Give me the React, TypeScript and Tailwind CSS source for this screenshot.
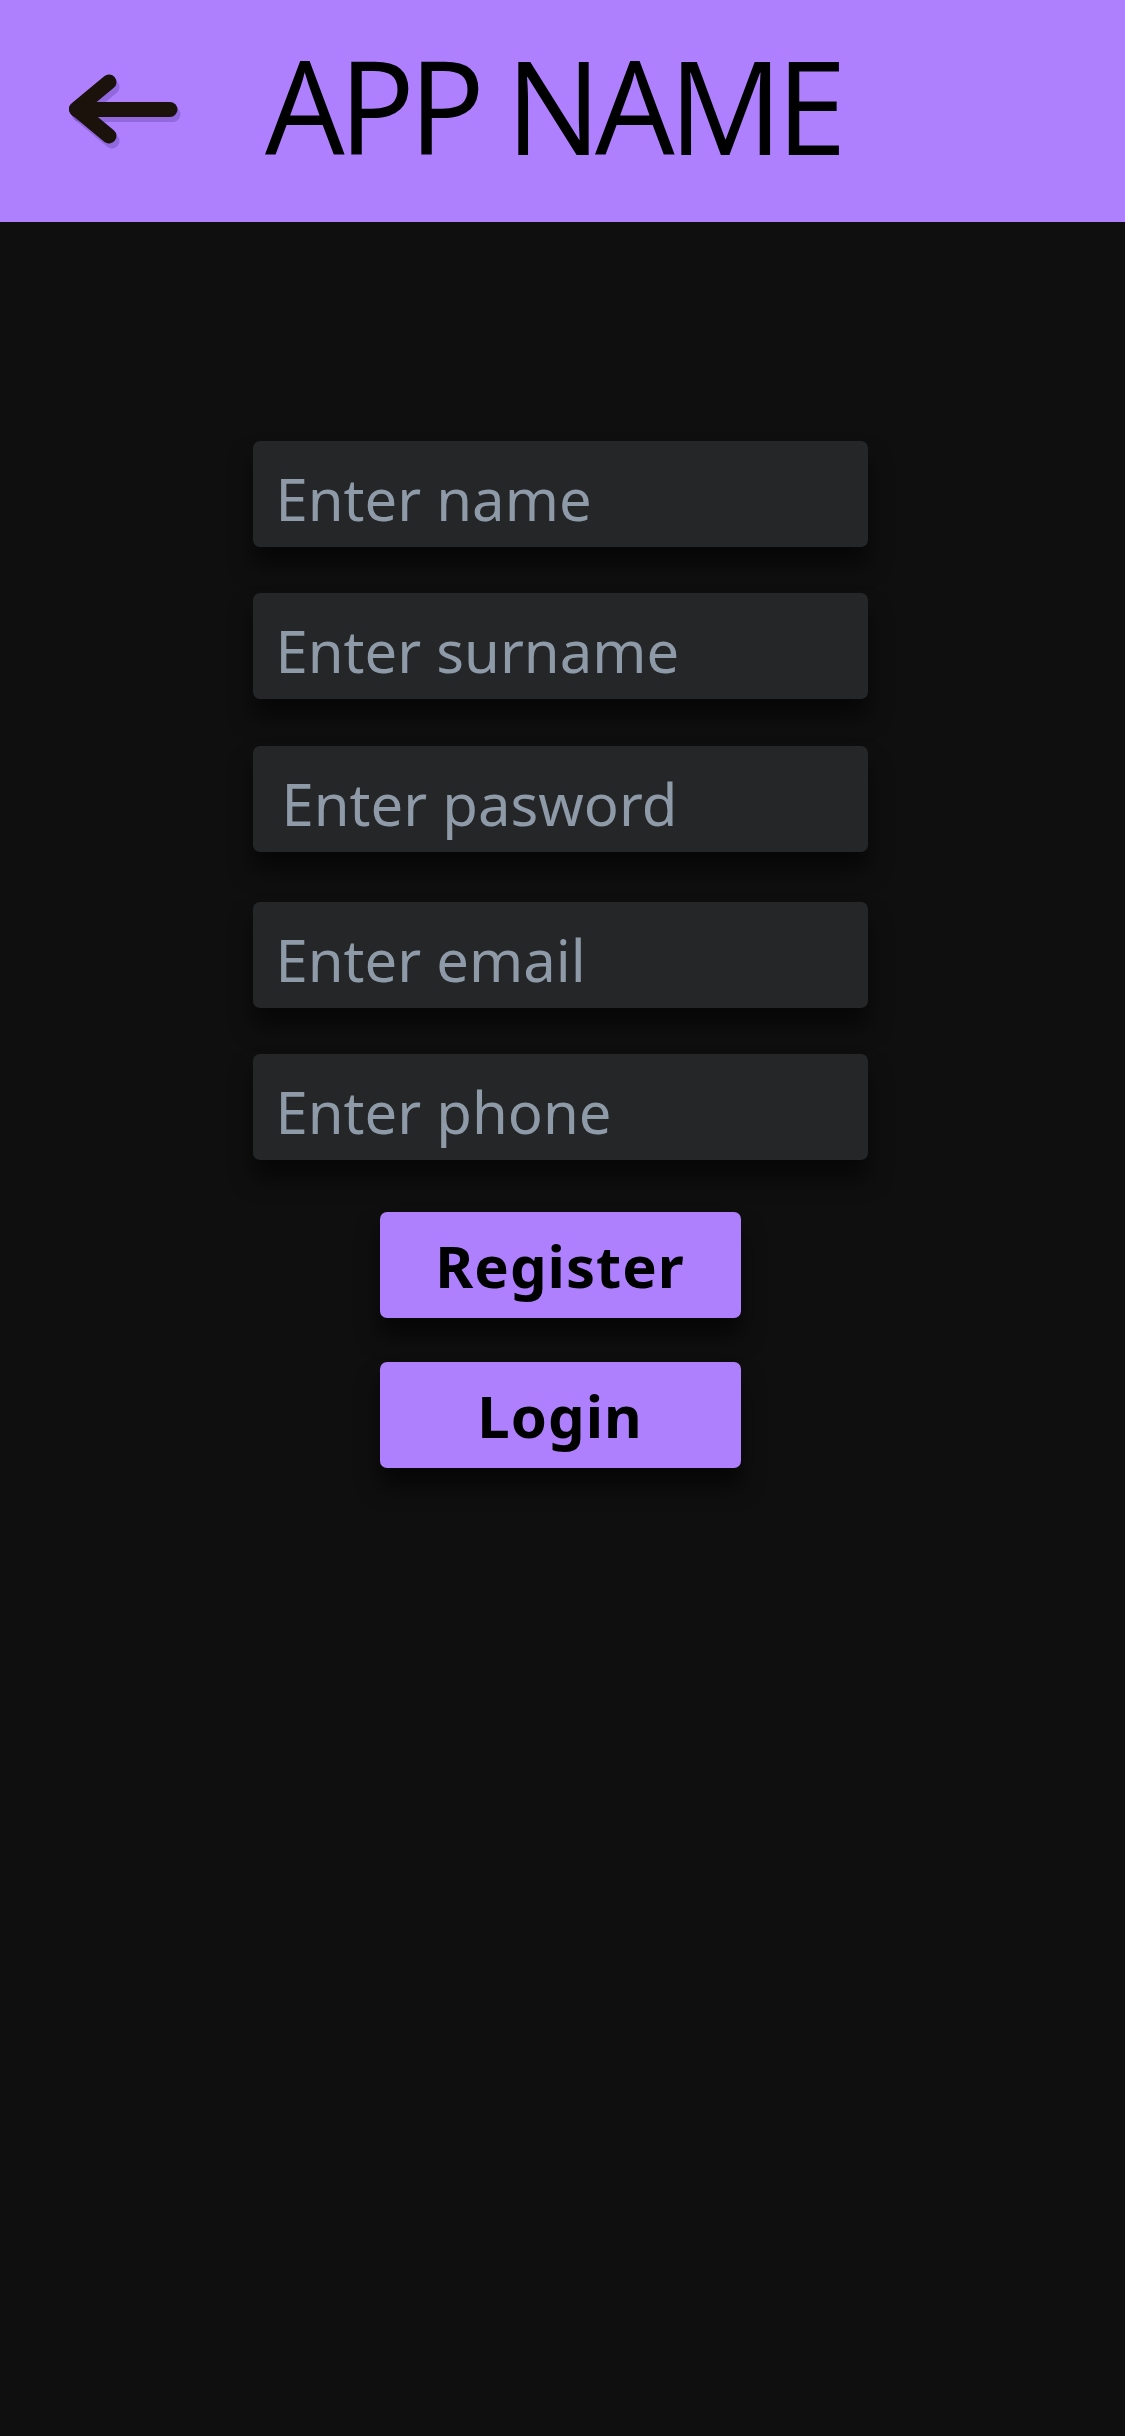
import { useState } from "react";

const fields = [
  { key: "name", placeholder: "Enter name", type: "text", pad: "pl-[23px]", gap: "mt-0" },
  { key: "surname", placeholder: "Enter surname", type: "text", pad: "pl-[23px]", gap: "mt-[46px]" },
  { key: "password", placeholder: "Enter pasword", type: "text", pad: "pl-[29px]", gap: "mt-[47px]" },
  { key: "email", placeholder: "Enter email", type: "email", pad: "pl-[23px]", gap: "mt-[50px]" },
  { key: "phone", placeholder: "Enter phone", type: "tel", pad: "pl-[23px]", gap: "mt-[46px]" }
];

function BackArrow() {
  return (
    <svg width="130" height="92" viewBox="0 0 130 92" fill="none" className="ml-[60px] shrink-0">
      <g stroke="#6f4bb8" strokeOpacity="0.45" strokeWidth="15" strokeLinecap="round" strokeLinejoin="round" transform="translate(3 5)">
        <path d="M49 17 L16.5 44 L49 71" />
        <path d="M16.5 44.5 H110" />
      </g>
      <g stroke="#1c120c" strokeWidth="15" strokeLinecap="round" strokeLinejoin="round">
        <path d="M49 17 L16.5 44 L49 71" />
        <path d="M16.5 44.5 H110" />
      </g>
    </svg>
  );
}

export default function App() {
  const [values, setValues] = useState<Record<string, string>>({});

  return (
    <div className="min-h-[2436px] w-full bg-[#0f0f0f] font-['Noto_Sans',sans-serif]">
      <header className="flex h-[222px] items-center bg-[#ae80fe]">
        <BackArrow />
        <h1 className="ml-[75px] mt-[-12px] origin-left scale-x-[0.97] whitespace-nowrap font-['Open_Sans',sans-serif] text-[130px] font-normal leading-none tracking-[-6px] text-black">
          APP NAME
        </h1>
      </header>

      <main className="flex flex-col items-center pr-[5px] pt-[219px]">
        {fields.map((field) => (
          <input
            key={field.key}
            type={field.type}
            placeholder={field.placeholder}
            value={values[field.key] ?? ""}
            onChange={(e) => setValues((v) => ({ ...v, [field.key]: e.target.value }))}
            className={`${field.gap} ${field.pad} h-[106px] w-[615px] rounded-[7px] bg-[#252628] pt-[8px] font-['Noto_Sans',sans-serif] text-[58px] text-[#8e9aa8] shadow-[0_18px_22px_rgba(0,0,0,0.55)] outline-none placeholder:text-[#8e9aa8]`}
          />
        ))}

        <button
          type="button"
          className="mt-[52px] h-[106px] w-[361px] rounded-[7px] bg-[#ae80fe] font-['Noto_Sans',sans-serif] text-[58px] font-bold tracking-[1px] text-black shadow-[0_18px_22px_rgba(0,0,0,0.6)]"
        >
          Register
        </button>
        <button
          type="button"
          className="mt-[44px] h-[106px] w-[361px] rounded-[7px] bg-[#ae80fe] font-['Noto_Sans',sans-serif] text-[58px] font-bold tracking-[1px] text-black shadow-[0_18px_22px_rgba(0,0,0,0.6)]"
        >
          Login
        </button>
      </main>
    </div>
  );
}
